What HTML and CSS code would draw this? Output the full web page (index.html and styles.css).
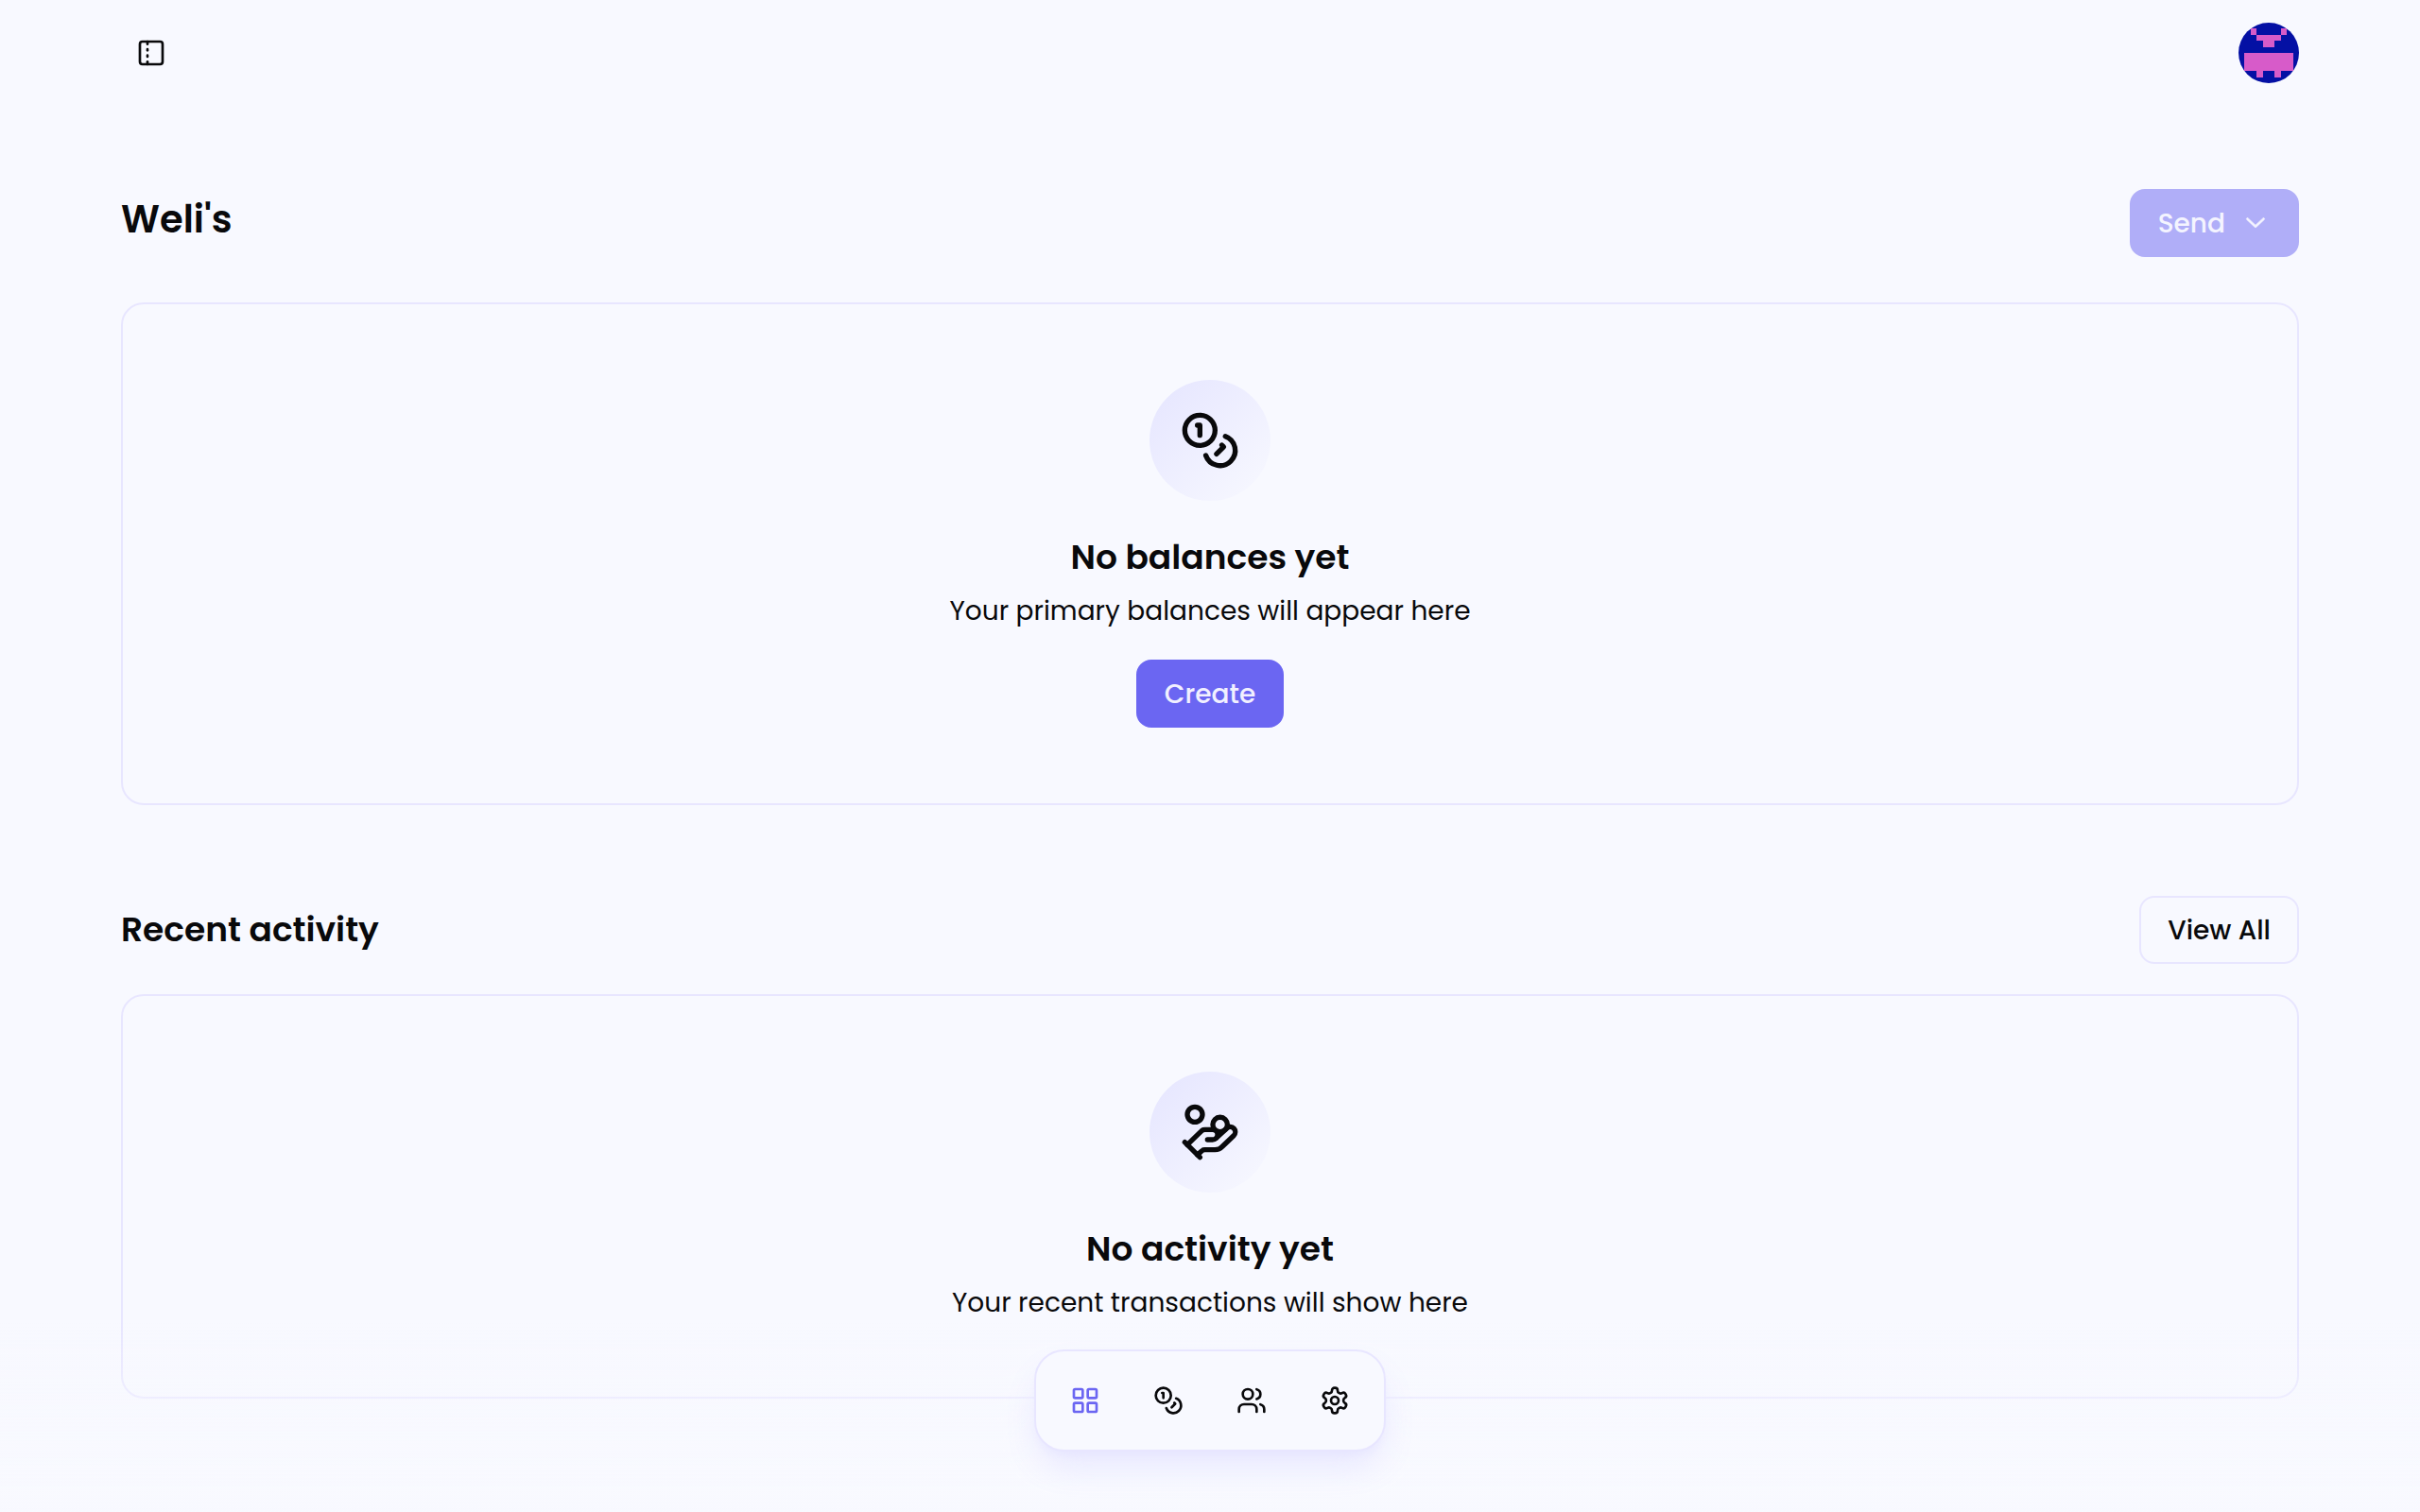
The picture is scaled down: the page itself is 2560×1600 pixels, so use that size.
FILE: index.html
```html
<!DOCTYPE html>
<html lang="en">
<head>
    <meta charset="UTF-8">
    <meta name="viewport" content="width=device-width, initial-scale=1.0">
    <title>Weli's</title>
    <link rel="stylesheet" href="styles.css">
</head>
<body>

    <header class="topbar">
        <button type="button" class="sidebar-toggle" aria-label="Toggle sidebar">
            <svg class="icon" viewBox="0 0 24 24">
                <rect width="18" height="18" x="3" y="3" rx="2"/>
                <path d="M9 14v1"/>
                <path d="M9 19v2"/>
                <path d="M9 3v2"/>
                <path d="M9 9v1"/>
            </svg>
        </button>
        <button type="button" class="avatar" aria-label="Account">
            <svg viewBox="0 0 10 10" shape-rendering="crispEdges">
                <rect width="10" height="10" fill="#0410a4"/>
                <path fill="#d75bc9" d="M2 1h1v1h4v-1h1v1h-1v1h-1v1h-2v-1h-1v-1h-1zM1 5h8v3h-2v1h-1v-1h-2v1h-1v-1h-2z"/>
            </svg>
        </button>
    </header>

    <main class="content">
        <section class="section">
            <div class="section-header">
                <h1 class="page-title">Weli's</h1>
                <button type="button" class="btn btn-primary" disabled>
                    Send
                    <svg class="chevron" viewBox="0 1.5 15 15">
                        <path d="M3.135 6.158C3.324 5.957 3.641 5.946 3.842 6.135L7.5 9.565L11.158 6.135C11.36 5.946 11.676 5.957 11.865 6.158C12.054 6.359 12.043 6.676 11.842 6.865L7.842 10.615C7.65 10.795 7.35 10.795 7.158 10.615L3.158 6.865C2.957 6.676 2.946 6.359 3.135 6.158Z"/>
                    </svg>
                </button>
            </div>
            <div class="card">
                <div class="card-icon">
                    <svg class="icon icon-large" viewBox="0 0 24 24">
                        <circle cx="8" cy="8" r="6"/>
                        <path d="M18.09 10.37A6 6 0 1 1 10.34 18"/>
                        <path d="M7 6h1v4"/>
                        <path d="m16.71 13.88.7.71-2.82 2.82"/>
                    </svg>
                </div>
                <h3 class="card-title">No balances yet</h3>
                <p class="card-text">Your primary balances will appear here</p>
                <button type="button" class="btn btn-primary card-action">Create</button>
            </div>
        </section>

        <section class="section section-activity">
            <div class="section-header">
                <h2 class="section-title">Recent activity</h2>
                <button type="button" class="btn btn-outline">View All</button>
            </div>
            <div class="card">
                <div class="card-icon">
                    <svg class="icon icon-large" viewBox="0 0 24 24">
                        <path d="M11 15h2a2 2 0 1 0 0-4h-3c-.6 0-1.1.2-1.4.6L3 17"/>
                        <path d="m7 21 1.6-1.4c.3-.4.8-.6 1.4-.6h4c1.1 0 2.1-.4 2.8-1.2l4.6-4.4a2 2 0 0 0-2.75-2.91l-4.2 3.9"/>
                        <path d="m2 16 6 6"/>
                        <circle cx="16" cy="9" r="2.9"/>
                        <circle cx="6" cy="5" r="3"/>
                    </svg>
                </div>
                <h3 class="card-title">No activity yet</h3>
                <p class="card-text">Your recent transactions will show here</p>
            </div>
        </section>
    </main>

    <!-- Floating navigation -->
    <div class="dock-wrap">
        <nav class="dock">
            <a href="#" class="dock-link active" aria-label="Dashboard">
                <svg class="icon" viewBox="0 0 24 24">
                    <rect width="7" height="7" x="3" y="3" rx="1"/>
                    <rect width="7" height="7" x="14" y="3" rx="1"/>
                    <rect width="7" height="7" x="14" y="14" rx="1"/>
                    <rect width="7" height="7" x="3" y="14" rx="1"/>
                </svg>
            </a>
            <a href="#" class="dock-link" aria-label="Balances">
                <svg class="icon" viewBox="0 0 24 24">
                    <circle cx="8" cy="8" r="6"/>
                    <path d="M18.09 10.37A6 6 0 1 1 10.34 18"/>
                    <path d="M7 6h1v4"/>
                    <path d="m16.71 13.88.7.71-2.82 2.82"/>
                </svg>
            </a>
            <a href="#" class="dock-link" aria-label="Members">
                <svg class="icon" viewBox="0 0 24 24">
                    <path d="M16 21v-2a4 4 0 0 0-4-4H6a4 4 0 0 0-4 4v2"/>
                    <circle cx="9" cy="7" r="4"/>
                    <path d="M22 21v-2a4 4 0 0 0-3-3.87"/>
                    <path d="M16 3.13a4 4 0 0 1 0 7.75"/>
                </svg>
            </a>
            <a href="#" class="dock-link" aria-label="Settings">
                <svg class="icon" viewBox="0 0 24 24">
                    <path d="M12.22 2h-.44a2 2 0 0 0-2 2v.18a2 2 0 0 1-1 1.73l-.43.25a2 2 0 0 1-2 0l-.15-.08a2 2 0 0 0-2.73.73l-.22.38a2 2 0 0 0 .73 2.73l.15.1a2 2 0 0 1 1 1.72v.51a2 2 0 0 1-1 1.74l-.15.09a2 2 0 0 0-.73 2.73l.22.38a2 2 0 0 0 2.73.73l.15-.08a2 2 0 0 1 2 0l.43.25a2 2 0 0 1 1 1.73V20a2 2 0 0 0 2 2h.44a2 2 0 0 0 2-2v-.18a2 2 0 0 1 1-1.73l.43-.25a2 2 0 0 1 2 0l.15.08a2 2 0 0 0 2.73-.73l.22-.39a2 2 0 0 0-.73-2.73l-.15-.08a2 2 0 0 1-1-1.74v-.5a2 2 0 0 1 1-1.74l.15-.09a2 2 0 0 0 .73-2.73l-.22-.38a2 2 0 0 0-2.73-.73l-.15.08a2 2 0 0 1-2 0l-.43-.25a2 2 0 0 1-1-1.73V4a2 2 0 0 0-2-2z"/>
                    <circle cx="12" cy="12" r="3"/>
                </svg>
            </a>
        </nav>
    </div>

</body>
</html>
```
FILE: styles.css
```css
* {
    box-sizing: border-box;
}

body {
    margin: 0;
    min-height: 100vh;
    font-family: Poppins, Inter, sans-serif;
    font-size: 28px;
    color: #09090b;
    background-color: #f8f9ff;
}

h1, h2, h3, p {
    margin: 0;
}

button {
    font-family: inherit;
    cursor: pointer;
}

.icon {
    display: block;
    width: 32px;
    height: 32px;
    fill: none;
    stroke: currentColor;
    stroke-width: 2;
    stroke-linecap: round;
    stroke-linejoin: round;
}

.icon-large {
    width: 64px;
    height: 64px;
}

/* Top bar */
.topbar {
    display: flex;
    justify-content: space-between;
    align-items: center;
    padding: 24px 5%;
}

.sidebar-toggle {
    padding: 16px;
    border: none;
    background: none;
    color: inherit;
}

.avatar {
    width: 64px;
    height: 64px;
    padding: 0;
    border: none;
    border-radius: 50%;
    overflow: hidden;
    background: none;
}

.avatar svg {
    display: block;
}

/* Sections */
.content {
    padding: 88px 5% 120px;
}

.section-activity {
    margin-top: 96px;
}

.section-header {
    display: flex;
    justify-content: space-between;
    align-items: flex-start;
    margin-bottom: 48px;
}

.section-activity .section-header {
    align-items: center;
    margin-bottom: 32px;
}

.page-title {
    font-size: 40px;
    line-height: 64px;
    font-weight: 600;
}

.section-title,
.card-title {
    font-size: 36px;
    line-height: 56px;
    font-weight: 600;
}

/* Buttons */
.btn {
    display: flex;
    align-items: center;
    gap: 16px;
    height: 72px;
    padding: 2px 28px 0;
    border: 2px solid transparent;
    border-radius: 16px;
    font-size: 28px;
    font-weight: 500;
}

.btn-primary {
    border-color: #6b66f2;
    background-color: #6b66f2;
    color: #f1f0ff;
}

.btn-primary:disabled {
    opacity: 0.5;
    cursor: default;
}

.btn-outline {
    border-color: #e8e6ff;
    background-color: #f8f9ff;
    color: #09090b;
}

.chevron {
    width: 32px;
    height: 32px;
    fill: currentColor;
    stroke: currentColor;
    stroke-width: 0.3;
}

/* Empty state cards */
.card {
    display: flex;
    flex-direction: column;
    align-items: center;
    padding: 80px;
    border: 2px solid #e8e6ff;
    border-radius: 24px;
    text-align: center;
}

.card-icon {
    display: flex;
    justify-content: center;
    align-items: center;
    width: 128px;
    height: 128px;
    margin-bottom: 32px;
    border-radius: 50%;
    background: linear-gradient(135deg, #e5e5ff, #f8f9ff);
}

.card-text {
    margin-top: 10px;
    line-height: 38px;
}

.card-action {
    margin-top: 32px;
}

/* Bottom dock, content fades out behind it */
.dock-wrap {
    position: fixed;
    left: 0;
    right: 0;
    bottom: 0;
    display: flex;
    justify-content: center;
    align-items: flex-end;
    height: 200px;
    padding-bottom: 64px;
    background: linear-gradient(to bottom, rgba(248, 249, 255, 0), #f8f9ff);
}

.dock {
    display: flex;
    gap: 32px;
    padding: 24px;
    border: 2px solid #e8e6ff;
    border-radius: 32px;
    background-color: #f8f9ff;
    box-shadow: 0 20px 40px -6px #e6e5ff, 0 8px 12px -6px #e6e5ff;
}

.dock-link {
    padding: 12px;
    color: #09090b;
}

.dock-link.active {
    color: #6b66f2;
}
```
